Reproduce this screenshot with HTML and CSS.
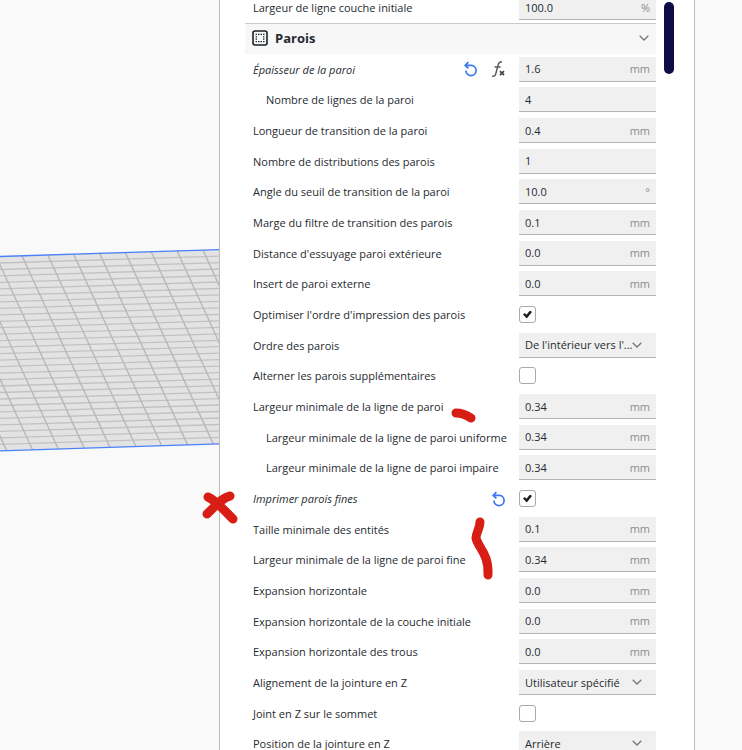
FILE: index.html
```
<!DOCTYPE html>
<html lang="fr">
<head>
  <meta charset="UTF-8" />
  <meta name="viewport" content="width=device-width, initial-scale=1.0"/>
  <title>Paramètres d'impression</title>
  <link rel="stylesheet" href="styles.css">
</head>
<body>
<svg class="icons" width="0" height="0" aria-hidden="true">
  <symbol id="reset" viewBox="0 0 16 16">
    <path d="M2.4 4.4H8.3A5.1 5.1 0 1 1 2.9 9.6" fill="none" stroke="#3d75f0" stroke-width="1.7"/>
    <path d="M5.4 1.2L2.2 4.4L5.4 7.4" fill="none" stroke="#3d75f0" stroke-width="1.7"/>
  </symbol>
  <symbol id="chevron" viewBox="0 0 10 6">
    <path d="M.7 .7L5 5L9.3 .7" fill="none" stroke="#777" stroke-width="1.3"/>
  </symbol>
</svg>

<main class="stage">
  <svg class="plate" width="219" height="220" aria-hidden="true">
    <g transform="skewY(-1.8)" fill="none">
      <path d="M0 16.5H219V210.8H0z" fill="#e3e3e3"/>
      <path stroke="#c2c2c2" stroke-width="1.3" d="M0 23H219M0 29.5H219M0 35.9H219M0 42.4H219M0 48.9H219M0 55.4H219M0 61.8H219M0 68.3H219M0 74.8H219M0 81.3H219M0 87.7H219M0 94.2H219M0 100.7H219M0 107.2H219M0 113.6H219M0 120.1H219M0 126.6H219M0 133.1H219M0 139.6H219M0 146H219M0 152.5H219M0 159H219M0 165.5H219M0 171.9H219M0 178.4H219M0 184.9H219M0 191.4H219M0 197.8H219M0 204.3H219"/>
      <path stroke="#b8b8b8" stroke-width="1.4" d="M-81.4 16.5l88 194.3M-55.5 16.5l88 194.3M-29.7 16.5l88 194.3M-3.8 16.5l88 194.3M22 16.5l88 194.3M47.9 16.5l88 194.3M73.7 16.5l88 194.3M99.6 16.5l88 194.3M125.4 16.5l88 194.3M151.3 16.5l88 194.3M177.1 16.5l88 194.3M203 16.5l88 194.3"/>
      <path stroke="#4a80fa" stroke-width="1.3" d="M0 16.5H219M0 210.8H219"/>
    </g>
  </svg>

  <form class="panel">
    <div class="settings">
      <div class="row"><label for="s0">Largeur de ligne couche initiale</label><span class="field"><input type="text" id="s0" value="100.0"><span class="unit">%</span></span></div>
      <button type="button" class="category">
        <svg class="cat-icon" viewBox="0 0 16 16"><rect x="1" y="1" width="14" height="14" rx="2" fill="none" stroke="#192026" stroke-width="1.6"/><path d="M3.6 4.4H12.6M3.6 11.6H12.6M3.6 6.8H5M3.6 9.2H5M11 6.8H12.4M11 9.2H12.4" fill="none" stroke="#192026" stroke-width="1.3" stroke-dasharray="1.4 1.1"/></svg>
        <span>Parois</span>
        <svg class="chevron"><use href="#chevron"/></svg>
      </button>
      <div class="rows">
        <div class="row changed">
          <label for="s1">Épaisseur de la paroi</label>
          <button type="button" class="tool" aria-label="Réinitialiser"><svg><use href="#reset"/></svg></button>
          <button type="button" class="tool" aria-label="Formule"><svg viewBox="0 0 16 16"><path d="M1.2 15C3 15.6 4.2 14.8 4.8 12.6L7.3 3.4C7.8 1.5 9 .6 11 1.1M3.6 6H9.6" fill="none" stroke="#5a5a5a" stroke-width="1.5"/><path d="M9 10.2L13 14.2M13 10.2L9 14.2" fill="none" stroke="#444" stroke-width="1.7"/></svg></button>
          <span class="field"><input type="text" id="s1" value="1.6"><span class="unit">mm</span></span>
        </div>
        <div class="row child"><label for="s2">Nombre de lignes de la paroi</label><span class="field"><input type="text" id="s2" value="4"></span></div>
        <div class="row"><label for="s3">Longueur de transition de la paroi</label><span class="field"><input type="text" id="s3" value="0.4"><span class="unit">mm</span></span></div>
        <div class="row"><label for="s4">Nombre de distributions des parois</label><span class="field"><input type="text" id="s4" value="1"></span></div>
        <div class="row"><label for="s5">Angle du seuil de transition de la paroi</label><span class="field"><input type="text" id="s5" value="10.0"><span class="unit">°</span></span></div>
        <div class="row"><label for="s6">Marge du filtre de transition des parois</label><span class="field"><input type="text" id="s6" value="0.1"><span class="unit">mm</span></span></div>
        <div class="row"><label for="s7">Distance d'essuyage paroi extérieure</label><span class="field"><input type="text" id="s7" value="0.0"><span class="unit">mm</span></span></div>
        <div class="row"><label for="s8">Insert de paroi externe</label><span class="field"><input type="text" id="s8" value="0.0"><span class="unit">mm</span></span></div>
        <div class="row"><label for="s9">Optimiser l'ordre d'impression des parois</label><span class="check"><input type="checkbox" id="s9" checked></span></div>
        <div class="row"><label for="s10">Ordre des parois</label><span class="field"><select id="s10"><option>De l'intérieur vers l'...</option></select><svg class="chevron"><use href="#chevron"/></svg></span></div>
        <div class="row"><label for="s11">Alterner les parois supplémentaires</label><span class="check"><input type="checkbox" id="s11"></span></div>
        <div class="row"><label for="s12">Largeur minimale de la ligne de paroi</label><span class="field"><input type="text" id="s12" value="0.34"><span class="unit">mm</span></span></div>
        <div class="row child"><label for="s13">Largeur minimale de la ligne de paroi uniforme</label><span class="field"><input type="text" id="s13" value="0.34"><span class="unit">mm</span></span></div>
        <div class="row child"><label for="s14">Largeur minimale de la ligne de paroi impaire</label><span class="field"><input type="text" id="s14" value="0.34"><span class="unit">mm</span></span></div>
        <div class="row changed">
          <label for="s15">Imprimer parois fines</label>
          <button type="button" class="tool" aria-label="Réinitialiser"><svg><use href="#reset"/></svg></button>
          <span class="check"><input type="checkbox" id="s15" checked></span>
        </div>
        <div class="row"><label for="s16">Taille minimale des entités</label><span class="field"><input type="text" id="s16" value="0.1"><span class="unit">mm</span></span></div>
        <div class="row"><label for="s17">Largeur minimale de la ligne de paroi fine</label><span class="field"><input type="text" id="s17" value="0.34"><span class="unit">mm</span></span></div>
        <div class="row"><label for="s18">Expansion horizontale</label><span class="field"><input type="text" id="s18" value="0.0"><span class="unit">mm</span></span></div>
        <div class="row"><label for="s19">Expansion horizontale de la couche initiale</label><span class="field"><input type="text" id="s19" value="0.0"><span class="unit">mm</span></span></div>
        <div class="row"><label for="s20">Expansion horizontale des trous</label><span class="field"><input type="text" id="s20" value="0.0"><span class="unit">mm</span></span></div>
        <div class="row"><label for="s21">Alignement de la jointure en Z</label><span class="field"><select id="s21"><option>Utilisateur spécifié</option></select><svg class="chevron"><use href="#chevron"/></svg></span></div>
        <div class="row"><label for="s22">Joint en Z sur le sommet</label><span class="check"><input type="checkbox" id="s22"></span></div>
        <div class="row"><label for="s23">Position de la jointure en Z</label><span class="field"><select id="s23"><option>Arrière</option></select><svg class="chevron"><use href="#chevron"/></svg></span></div>
      </div>
    </div>
    <div class="scrollbar"></div>

    <!-- red marker strokes -->
    <svg class="marks" width="310" height="190" viewBox="200 400 310 190" aria-hidden="true">
      <g fill="none" stroke="#d81e14" stroke-width="9" stroke-linecap="round" stroke-linejoin="round">
        <path d="M456 413C461 413 465 414 471 418"/>
        <path d="M208 497C215 500 221 507 233 519M230 496C221 498 215 507 207 514"/>
        <path d="M480 522C480 528 476 533 476 538C478 548 489 553 488 575"/>
      </g>
    </svg>
  </form>
</main>
</body>
</html>
```

FILE: styles.css
```
* { box-sizing: border-box; }
body { margin: 0; background: #f9f9f9; color: #262b30; font-family: "Open Sans", "Noto Sans", sans-serif; font-size: 11px; }
input, select, button { font: inherit; color: inherit; }
button { background: none; border: none; padding: 0; cursor: pointer; }
.icons { position: absolute; }

.stage { display: flex; justify-content: flex-end; height: 100vh; overflow: hidden; padding-right: 47px; }
.plate { flex: none; margin-top: 240px; }

.panel { position: relative; flex: none; display: flex; align-items: flex-start; gap: 8px; width: 476px; padding-left: 25px; background: #fff; border: solid #bcbcbc; border-width: 0 1px; }
.settings { width: 411px; margin-top: -8px; }
.scrollbar { width: 10px; height: 72px; margin-top: 2px; border-radius: 5px; background: #0f0c46; }

/* rows */
.row { display: flex; align-items: center; height: 31px; padding-left: 8px; }
.rows .row:nth-child(3n+1) { height: 30px; }
.row label { flex: 1; white-space: nowrap; }
.child { padding-left: 21px; }
.changed label { font-style: italic; }

.category { display: flex; align-items: center; width: 100%; height: 31px; padding: 0 7px 2px; background: #f7f7f7; border-top: 1px solid #ccc; font-size: 13px; font-weight: bold; text-align: left; }
.category span { flex: 1; margin-left: 7px; }
.cat-icon { width: 16px; height: 16px; }
.chevron { width: 10px; height: 6px; flex: none; }

.tool { width: 16px; height: 16px; margin-right: 12px; }
.tool svg { display: block; width: 16px; height: 16px; }

/* values */
.field { display: flex; align-items: center; width: 137px; height: 25px; padding: 0 6px; background: #f0f0f0; border-bottom: 1px solid #b4b4b4; }
.field input { flex: 1; min-width: 0; padding: 0; border: none; background: none; }
.field select { flex: 1; min-width: 0; padding: 0; border: none; background: none; appearance: none; }
.field .chevron { margin-right: 8px; }
.unit { color: #8c8c8c; }
.check { display: flex; width: 137px; }
.check input { appearance: none; display: grid; place-items: center; width: 17px; height: 17px; margin: 0; border: 1px solid #aaa; border-radius: 3px; background: #fff; }
.check input:checked::before { content: ""; width: 9px; height: 8px; background: #192026; clip-path: polygon(0 50%, 20% 32%, 38% 52%, 78% 0, 100% 20%, 42% 100%); }

.marks { position: absolute; left: -20px; top: 400px; pointer-events: none; }
```
